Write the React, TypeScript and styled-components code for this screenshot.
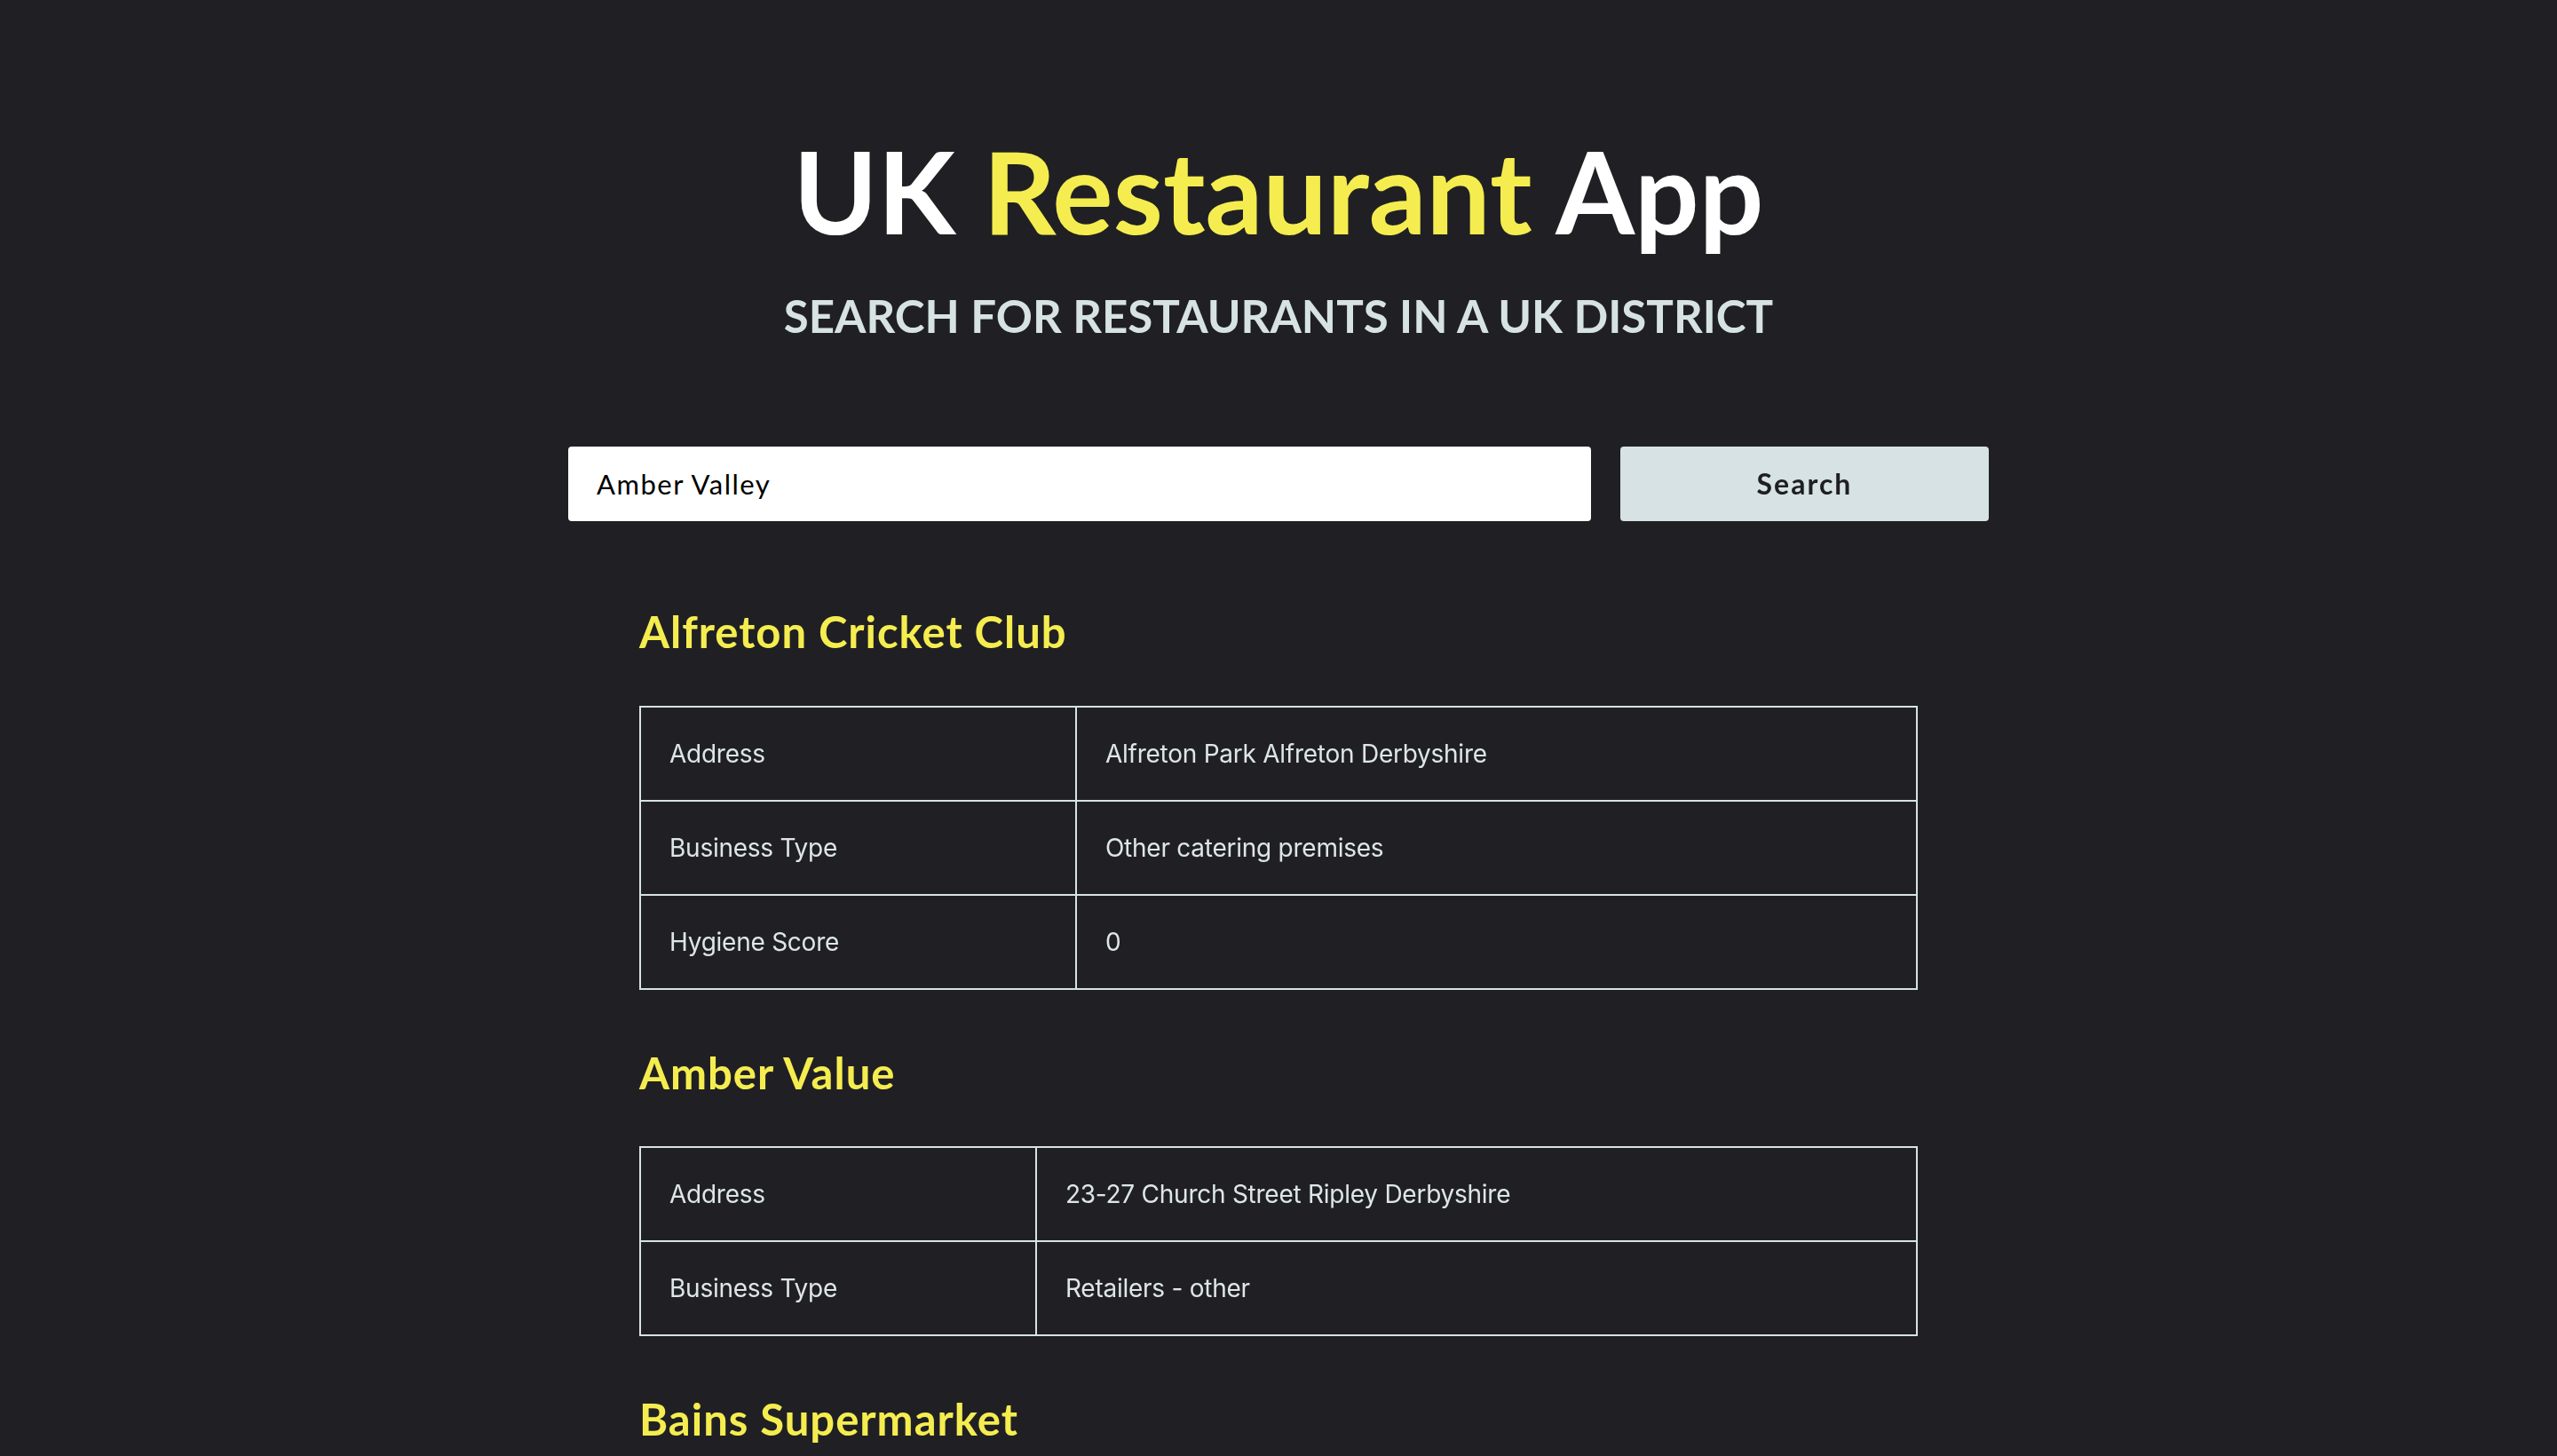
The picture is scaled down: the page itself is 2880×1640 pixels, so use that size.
import React, { useState } from 'react';
import styled, { createGlobalStyle } from 'styled-components';

interface Restaurant {
  name: string;
  rows: { label: string; value: string }[];
}

const restaurants: Restaurant[] = [
  {
    name: 'Alfreton Cricket Club',
    rows: [
      { label: 'Address', value: 'Alfreton Park Alfreton Derbyshire' },
      { label: 'Business Type', value: 'Other catering premises' },
      { label: 'Hygiene Score', value: '0' },
    ],
  },
  {
    name: 'Amber Value',
    rows: [
      { label: 'Address', value: '23-27 Church Street Ripley Derbyshire' },
      { label: 'Business Type', value: 'Retailers - other' },
    ],
  },
  {
    name: 'Bains Supermarket',
    rows: [
      { label: 'Address', value: '1 High Street Alfreton Derbyshire' },
      { label: 'Business Type', value: 'Retailers - other' },
      { label: 'Hygiene Score', value: '5' },
    ],
  },
];

const App = () => {
  const [district, setDistrict] = useState('Amber Valley');

  // search is only a form here, results are static
  const onSubmit = (e: React.FormEvent<HTMLFormElement>) => {
    e.preventDefault();
  };

  return (
    <>
      <GlobalStyle />
      <Page>
        <Header>
          <Title>
            UK <Highlight>Restaurant</Highlight> App
          </Title>
          <Subtitle>Search for restaurants in a UK district</Subtitle>
        </Header>

        <SearchForm onSubmit={onSubmit}>
          <SearchInput
            autoFocus
            value={district}
            onChange={(e) => setDistrict(e.target.value)}
          />
          <SearchButton type="submit">Search</SearchButton>
        </SearchForm>

        <Results>
          {restaurants.map((r) => (
            <Card key={r.name}>
              <CardTitle>{r.name}</CardTitle>
              <InfoTable>
                <tbody>
                  {r.rows.map((row) => (
                    <tr key={row.label}>
                      <Cell>{row.label}</Cell>
                      <Cell>{row.value}</Cell>
                    </tr>
                  ))}
                </tbody>
              </InfoTable>
            </Card>
          ))}
        </Results>
      </Page>
    </>
  );
};

const GlobalStyle = createGlobalStyle`
  html, body {
    margin: 0;
    background-color: #202024;
  }
  * {
    box-sizing: border-box;
  }
`;

const Page = styled.main`
  min-height: 100vh;
  display: flex;
  flex-direction: column;
  align-items: center;
  padding: 138px 0 120px;
  font-family: Lato, 'Open Sans', sans-serif;
`;

const Header = styled.header`
  display: flex;
  flex-direction: column;
  align-items: center;
  gap: 33px;
`;

const Title = styled.h1`
  margin: 0;
  font-size: 128px;
  line-height: 1.2;
  font-weight: 700;
  color: #ffffff;
`;

const Highlight = styled.span`
  color: #f5ed4f;
`;

const Subtitle = styled.h2`
  margin: 0;
  font-size: 51px;
  line-height: 1.2;
  font-weight: 700;
  text-transform: uppercase;
  color: #d6e2e3;
`;

const SearchForm = styled.form`
  width: 1600px;
  margin-top: 117px;
  display: flex;
  gap: 33px;
`;

const SearchInput = styled.input`
  flex: 1;
  height: 84px;
  padding: 0 32px;
  border: none;
  border-radius: 4px;
  background: #ffffff;
  color: #000000;
  font-family: Lato, 'Open Sans', sans-serif;
  font-size: 31px;
  letter-spacing: 1.5px;
  outline: none;
  caret-color: #000000;
`;

const SearchButton = styled.button`
  width: 415px;
  height: 84px;
  border: none;
  border-radius: 4px;
  background: #d6e2e3;
  color: #1f1f23;
  font-family: Lato, 'Open Sans', sans-serif;
  font-size: 32px;
  font-weight: 700;
  letter-spacing: 2px;
  cursor: pointer;
`;

const Results = styled.section`
  width: 1440px;
  margin-top: 95px;
  display: flex;
  flex-direction: column;
  gap: 64px;
`;

const Card = styled.article`
  display: flex;
  flex-direction: column;
  gap: 54px;
`;

const CardTitle = styled.h3`
  margin: 0;
  font-size: 49px;
  line-height: 1.2;
  font-weight: 700;
  letter-spacing: 1px;
  color: #f5ed4f;
`;

const InfoTable = styled.table`
  width: 100%;
  border-collapse: collapse;
  border: 2px solid #d6e2e3;
`;

const Cell = styled.td`
  border: 2px solid #d6e2e3;
  padding: 32px;
  font-family: Inter, 'Noto Sans', sans-serif;
  font-size: 28px;
  line-height: 40px;
  letter-spacing: -0.25px;
  color: #dde6e6;
  text-align: left;
`;

export default App;
